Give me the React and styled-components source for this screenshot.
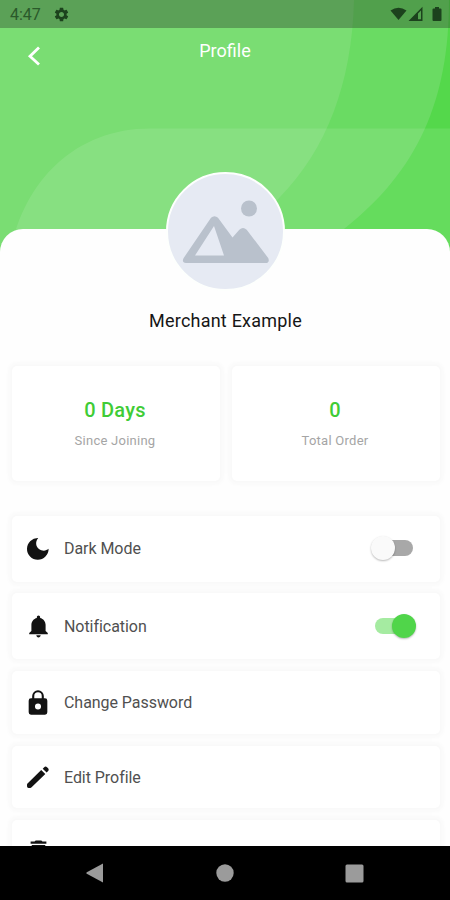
import React, { useState } from "react";
import styled, { createGlobalStyle } from "styled-components";
import { IoMdNotifications } from "react-icons/io";
import { MdSettings, MdDelete } from "react-icons/md";

const GlobalStyle = createGlobalStyle`
  * { box-sizing: border-box; }
  body { margin: 0; background: #fff; font-family: Roboto, "Liberation Sans", sans-serif; }
`;

const Screen = styled.div`
  width: 450px;
  height: 900px;
  display: flex;
  flex-direction: column;
  overflow: hidden;
  background: #fefefe;
`;

const Header = styled.header`
  position: relative;
  height: 252px;
  flex: none;
  background: #54d84b;
`;

const Waves = styled.svg`
  position: absolute;
  inset: 0;
  display: block;
`;

const StatusBar = styled.div`
  position: relative;
  height: 28px;
  padding: 1px 8px 0 10px;
  display: flex;
  align-items: center;
  background: rgba(30, 40, 30, 0.33);
  color: #1c421d;
`;

const Clock = styled.span`
  width: 43px;
  font-size: 16px;
  line-height: 20px;
  color: #2a592a;
`;

const StatusIcons = styled.svg`
  margin-left: auto;
`;

const TitleBar = styled.div`
  position: relative;
  display: grid;
  grid-template-columns: 52px 1fr 52px;
  height: 54px;
  color: #fff;
`;

const BackButton = styled.button`
  border: 0;
  padding: 1px 0 0 15px;
  background: none;
  color: inherit;
  display: flex;
  align-items: center;
  justify-content: center;
`;

const Title = styled.h1`
  margin: 12px 0 0;
  font-size: 18px;
  line-height: 21px;
  font-weight: 400;
  text-align: center;
`;

const Sheet = styled.main`
  position: relative;
  flex: 1;
  min-height: 0;
  margin-top: -23px;
  padding: 0 10px 0 12px;
  border-radius: 23px 23px 0 0;
  background: #fefefe;
  display: flex;
  flex-direction: column;
`;

const Avatar = styled.div`
  flex: none;
  align-self: center;
  width: 119px;
  height: 119px;
  margin: -57px 0 0 -1px;
  border: 2px solid #fdfffd;
  border-radius: 50%;
  background: #e6eaf3;

  svg { display: block; }
`;

const Name = styled.h2`
  flex: none;
  margin: 18px 1px 0 0;
  font-size: 18px;
  line-height: 24px;
  font-weight: 400;
  letter-spacing: 0.22px;
  text-align: center;
  color: #161616;
`;

const Stats = styled.section`
  flex: none;
  display: grid;
  grid-template-columns: 1fr 1fr;
  gap: 12px;
  margin-top: 33px;
`;

const Card = styled.div`
  border-radius: 5px;
  background: #fff;
  box-shadow: 0 0 4px 3px #f8f8f8;
`;

const Stat = styled(Card)`
  height: 115px;
  padding: 32px 2px 0 0;
  text-align: center;
`;

const StatValue = styled.div`
  font-size: 20px;
  line-height: 24px;
  font-weight: 500;
  letter-spacing: 0.25px;
  color: #3fcc36;
`;

const StatLabel = styled.div`
  margin-top: 11px;
  font-size: 13px;
  line-height: 16px;
  letter-spacing: 0.25px;
  color: #a5a5a5;
`;

const Menu = styled.section`
  flex: 1;
  min-height: 0;
  margin: 27px -10px 0 -12px;
  padding: 8px 10px 0 12px;
  overflow: hidden;
  display: flex;
  flex-direction: column;
`;

const Row = styled(Card)`
  flex: none;
  height: ${(p) => p.$height}px;
  margin-bottom: ${(p) => p.$gap}px;
  padding: 0 23px 0 12px;
  display: flex;
  align-items: center;
`;

const RowIcon = styled.span`
  width: 28px;
  height: 28px;
  margin-bottom: ${(p) => p.$lift || 0}px;
  display: flex;
  align-items: center;
  justify-content: center;
  color: #121212;
`;

const RowLabel = styled.span`
  margin: ${(p) => p.$drop || 0}px 0 0 12px;
  font-size: 16px;
  line-height: 20px;
  letter-spacing: -0.05px;
  color: #505050;
`;

const Track = styled.button`
  position: relative;
  width: 38px;
  height: 16px;
  margin: 0 ${(p) => (p.$on ? "4px 0" : "4px 2px")} auto;
  padding: 0;
  border: 0;
  border-radius: 8px;
  background: ${(p) => (p.$on ? "#a5eba1" : "#a8a8a8")};
`;

const Thumb = styled.span`
  position: absolute;
  top: -4px;
  left: ${(p) => (p.$on ? "17px" : "-4px")};
  width: 24px;
  height: 24px;
  border-radius: 50%;
  background: ${(p) => (p.$on ? "#50d54a" : "#fafafa")};
  box-shadow: 0 1px 2px rgba(0, 0, 0, 0.28);
`;

const NavBar = styled.nav`
  flex: none;
  height: 54px;
  background: #000;
  display: flex;
  align-items: center;
  justify-content: space-between;
  padding: 0 86px 0 86px;

  svg { display: block; }
`;

const MoonIcon = () => (
  <svg width="24" height="24" viewBox="0 0 24 24" fill="currentColor">
    <path d="M12.2 1.1A10.8 10.8 0 1 0 22.6 11.8C20 14.2 16 14.2 13 12 9.8 9.5 9 5 12.2 1.1Z" />
  </svg>
);

const LockIcon = () => (
  <svg width="28" height="28" viewBox="0 0 24 24" fill="currentColor">
    <path
      fillRule="evenodd"
      d="M18 8h-1V6A5 5 0 0 0 7 6v2H6a2 2 0 0 0-2 2v10a2 2 0 0 0 2 2h12a2 2 0 0 0 2-2V10a2 2 0 0 0-2-2ZM8.8 8V6a3.2 3.2 0 0 1 6.4 0v2ZM12 12.4a2.6 2.6 0 1 1 0 5.2 2.6 2.6 0 0 1 0-5.2Z"
    />
  </svg>
);

const PencilIcon = () => (
  <svg width="24" height="24" viewBox="0 0 24 24" fill="currentColor">
    <path d="M1.5 18.6 15.2 5l4.1 4.1L5.6 22.3q-.6.6-1.4.6H2.6q-1.6 0-1.6-1.6v-1.4q0-.8.5-1.3z" />
    <path d="m16.7 3.7 1.5-1.5c.8-.8 2-.8 2.8 0l1.1 1.1c.8.8.8 2 0 2.8L20.6 7.6z" />
  </svg>
);

const Switch = ({ initial, label }) => {
  const [on, setOn] = useState(initial);
  return (
    <Track $on={on} onClick={() => setOn(!on)} role="switch" aria-checked={on} aria-label={label}>
      <Thumb $on={on} />
    </Track>
  );
};

const rows = [
  { label: "Dark Mode", icon: <MoonIcon />, height: 66, gap: 11, lift: 1, toggle: true, on: false },
  { label: "Notification", icon: <IoMdNotifications size={27} />, height: 66, gap: 12, drop: 1, toggle: true, on: true },
  { label: "Change Password", icon: <LockIcon />, height: 63, gap: 12 },
  { label: "Edit Profile", icon: <PencilIcon />, height: 62, gap: 12, drop: 1 },
  { label: "Delete Account", icon: <MdDelete size={27} />, height: 64, gap: 12, lift: 4, drop: 2 },
];

const App = () => {
  return (
    <>
      <GlobalStyle />
      <Screen>
        <Header>
          <Waves width="450" height="252" viewBox="0 0 450 252">
            <path d="M0 0H449C449 100 418 171 344 229L318 252H0Z" fill="#6adb63" />
            <path d="M0 0H354C352 84 326 150 280 197Q254 225 225 252H0Z" fill="#7add73" />
            <path d="M10 252C24 180 76 128.5 150 128.5H450V252Z" fill="#fff" fillOpacity=".1" />
          </Waves>
          <StatusBar>
            <Clock>4:47</Clock>
            <MdSettings size={17} />
            <StatusIcons width="52" height="18" viewBox="0 0 52 18" fill="currentColor">
              <path d="M.5 4.4Q8.5-.8 16.5 4.4L8.5 14Z" />
              <path fillRule="evenodd" d="M32.5.8V15H18.5ZM28 7.5V13.2H31V4.6Z" />
              <path d="M43 1h4v1.5h1.4q1.1 0 1.1 1.1V14q0 1-1 1h-7q-1 0-1-1V3.6q0-1.1 1.1-1.1H43Z" transform="translate(2 0)" />
            </StatusIcons>
          </StatusBar>
          <TitleBar>
            <BackButton aria-label="Back">
              <svg width="14" height="20" viewBox="0 0 14 20" fill="none" stroke="#fff" strokeWidth="2.8">
                <path d="m12 1.5-9 8.7 9 8.3" />
              </svg>
            </BackButton>
            <Title>Profile</Title>
          </TitleBar>
        </Header>

        <Sheet>
          <Avatar>
            <svg width="115" height="115" viewBox="0 0 115 115">
              <circle cx="81" cy="34.5" r="8" fill="#b9c1cc" />
              <path
                fill="#b9c1cc"
                fillRule="evenodd"
                d="M43 43.7q3.5-3 7 0L64.5 63.5l6.8-7.8q3.7-3.3 7.4 0L100.2 84q2 5-3 5H18q-5-1-2-5.5ZM46 52 27 81.5H56Z"
              />
            </svg>
          </Avatar>
          <Name>Merchant Example</Name>

          <Stats>
            <Stat>
              <StatValue>0 Days</StatValue>
              <StatLabel>Since Joining</StatLabel>
            </Stat>
            <Stat>
              <StatValue>0</StatValue>
              <StatLabel>Total Order</StatLabel>
            </Stat>
          </Stats>

          <Menu>
            {rows.map((row) => (
              <Row key={row.label} $height={row.height} $gap={row.gap}>
                <RowIcon $lift={row.lift}>{row.icon}</RowIcon>
                <RowLabel $drop={row.drop}>{row.label}</RowLabel>
                {row.toggle && <Switch initial={row.on} label={row.label} />}
              </Row>
            ))}
          </Menu>
        </Sheet>

        <NavBar>
          <svg width="18" height="20" viewBox="0 0 18 20" fill="#9b9b9b">
            <path d="M17 .5v19L.8 10.8q-1-.8 0-1.6Z" />
          </svg>
          <svg width="18" height="18" viewBox="0 0 18 18" fill="#9b9b9b">
            <circle cx="9" cy="9" r="8.7" />
          </svg>
          <svg width="19" height="19" viewBox="0 0 19 19" fill="#9b9b9b">
            <rect x=".5" y=".5" width="18" height="18" rx="1.5" />
          </svg>
        </NavBar>
      </Screen>
    </>
  );
};

export default App;
